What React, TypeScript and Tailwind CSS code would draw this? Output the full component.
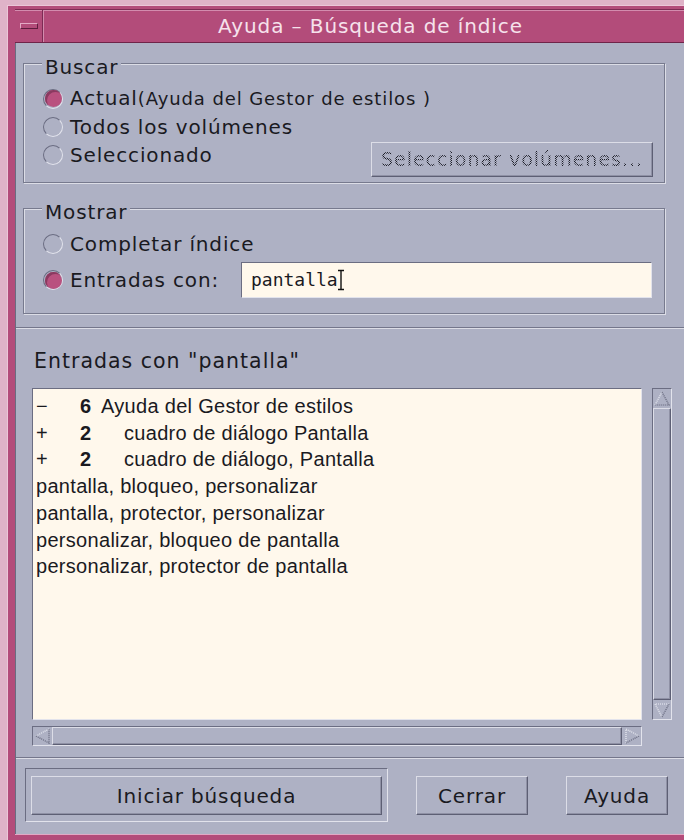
import React from "react";

const ui = "font-['DejaVu_Sans',sans-serif] text-[#1a1a1f]";
const raised =
  "border border-t-[#dcdde7] border-l-[#dcdde7] border-r-[#5d5f74] border-b-[#5d5f74] shadow-[inset_-1px_-1px_0_#8f91a5]";
const sunken =
  "border border-t-[#6b6d82] border-l-[#6b6d82] border-r-[#e2e3ec] border-b-[#e2e3ec]";
const etched =
  "border border-[#777a8e] shadow-[inset_1px_1px_0_#dcdde6,1px_1px_0_#dcdde6]";

const Radio = ({ on = false }: { on?: boolean }) => (
  <span
    className={`flex h-[20px] w-[20px] shrink-0 items-center justify-center rounded-full ${sunken}`}
  >
    {on && (
      <span className="h-[17px] w-[17px] rounded-full bg-[#b9517f] shadow-[inset_2px_2px_0_#8a3a60]" />
    )}
  </span>
);

const Separator = ({ className = "" }: { className?: string }) => (
  <div className={`h-[2px] border-t border-[#74768b] bg-[#dcdde6] ${className}`} />
);

// little stippled triangles used on the scroll bar ends
const Arrow = ({ dir }: { dir: "up" | "down" | "left" | "right" }) => {
  const shapes = {
    up: { light: "2,16 9,3", dark: "9,3 16,16 2,16" },
    down: { light: "16,3 2,3 9,16", dark: "9,16 16,3" },
    left: { light: "16,2 3,9", dark: "3,9 16,16 16,2" },
    right: { light: "3,16 3,2 16,9", dark: "16,9 3,16" },
  }[dir];
  return (
    <svg width="18" height="18" viewBox="0 0 18 18" className="shrink-0">
      <polyline points={shapes.light} fill="none" stroke="#eceef5" strokeWidth="1.2" strokeDasharray="1 1" />
      <polyline points={shapes.dark} fill="none" stroke="#5f6176" strokeWidth="1.2" strokeDasharray="1 1" />
    </svg>
  );
};

const IBeam = () => (
  <svg width="8" height="22" viewBox="0 0 8 22" className="-ml-[1px] shrink-0">
    <path d="M1 1.5h6M4 1.5v19M1 20.5h6" stroke="#111" strokeWidth="1.4" fill="none" />
  </svg>
);

const entries = [
  { sign: "−", count: "6", text: "Ayuda del Gestor de estilos", indent: false },
  { sign: "+", count: "2", text: "cuadro de diálogo Pantalla", indent: true },
  { sign: "+", count: "2", text: "cuadro de diálogo, Pantalla", indent: true },
];

const plainEntries = [
  "pantalla, bloqueo, personalizar",
  "pantalla, protector, personalizar",
  "personalizar, bloqueo de pantalla",
  "personalizar, protector de pantalla",
];

export default function App() {
  return (
    <div className="h-[840px] w-[684px] overflow-hidden bg-[#dfb3c8]">
      {/* window frame */}
      <div className="ml-[7px] mt-[5px] h-[900px] w-[760px] border-l border-t border-[#ecc6d8] bg-[#b34c7a] pl-[7px] pt-[3px]">
        {/* title bar */}
        <div className="flex h-[34px] w-[669px] border-y border-t-[#7d2b54] border-b-[#6f2449] bg-[#b34c7a] shadow-[inset_0_1px_0_#d38cae]">
          <div className="flex w-[28px] items-center justify-center border-r border-[#7d2b54] shadow-[1px_0_0_#d38cae]">
            <span className="h-[6px] w-[18px] border border-t-[#e3a9c5] border-l-[#e3a9c5] border-b-[#5e1c3e] border-r-[#5e1c3e] bg-[#b34c7a]" />
          </div>
          <div className="flex flex-1 items-center justify-center pl-[14px] font-['DejaVu_Sans',sans-serif] text-[20px] tracking-[0.9px] text-[#f6e2ec]">
            Ayuda – Búsqueda de índice
          </div>
        </div>

        {/* dialog body */}
        <div
          className={`h-[791px] w-[669px] border-l border-[#6a6c80] bg-[#aeb1c4] pt-[20px] shadow-[0_1px_0_#e2a9c4] ${ui} text-[20px] tracking-[0.85px]`}
        >
          {/* Buscar */}
          <div className={`ml-[7px] mr-[19px] pb-[5px] pl-[19px] pr-[11px] ${etched}`}>
            <div className="-ml-[1px] -mt-[9px] h-[24px] w-fit bg-[#aeb1c4] px-[3px] leading-[24px]">
              Buscar
            </div>
            <div className="mt-[5px] flex h-[29px] items-center gap-[7px] leading-[28px]">
              <Radio on />
              <span>
                Actual<span className="text-[18px] tracking-[0.9px]">(Ayuda del Gestor de estilos )</span>
              </span>
            </div>
            <div className="flex h-[28px] items-center gap-[7px] leading-[28px]">
              <Radio />
              <span>Todos los volúmenes</span>
            </div>
            <div className="flex h-[36px] items-start">
              <div className="flex h-[28px] items-center gap-[7px] leading-[28px]">
                <Radio />
                <span>Seleccionado</span>
              </div>
              <div
                className={`ml-auto mt-[1px] flex h-[35px] w-[282px] items-center justify-center bg-[#aeb1c4] ${raised}`}
              >
                <span className="bg-[conic-gradient(#1d1e28_25%,transparent_0_50%,#1d1e28_0_75%,transparent_0)] bg-[length:2px_2px] bg-clip-text text-[19px] tracking-[1px] text-transparent">
                  Seleccionar volúmenes...
                </span>
              </div>
            </div>
          </div>

          {/* Mostrar */}
          <div className={`ml-[7px] mr-[19px] mt-[25px] pb-[15px] pl-[19px] pr-[12px] ${etched}`}>
            <div className="-ml-[1px] -mt-[9px] h-[24px] w-fit bg-[#aeb1c4] px-[3px] leading-[24px]">
              Mostrar
            </div>
            <div className="mt-[5px] flex h-[29px] items-center gap-[7px] leading-[28px]">
              <Radio />
              <span>Completar índice</span>
            </div>
            <div className="mt-[4px] flex h-[36px] items-center leading-[28px]">
              <div className="flex items-center gap-[7px]">
                <Radio on />
                <span>Entradas con:</span>
              </div>
              <div
                className={`ml-auto flex h-[36px] w-[411px] items-center bg-[#fff8ec] pl-[9px] font-['DejaVu_Sans_Mono',monospace] text-[18px] tracking-normal ${sunken}`}
              >
                <span>pantalla</span>
                <IBeam />
              </div>
            </div>
          </div>

          <Separator className="mt-[13px]" />

          <div className="mt-[20px] pl-[18px] text-[20.5px] leading-[24px] tracking-[1px]">
            Entradas con "pantalla"
          </div>

          {/* results list with scroll bars */}
          <div className="ml-[16px] mt-[15px] flex gap-[10px]">
            <div
              className={`h-[332px] w-[610px] bg-[#fff8ec] pl-[3px] pt-[4px] font-['Liberation_Sans',Arial,sans-serif] text-[20px] leading-[26.7px] tracking-[0.3px] ${sunken}`}
            >
              {entries.map((e) => (
                <div key={e.text} className="flex">
                  <span className="w-[44px]">{e.sign}</span>
                  <span className="w-[21px] font-bold">{e.count}</span>
                  <span className={e.indent ? "pl-[23px]" : ""}>{e.text}</span>
                </div>
              ))}
              {plainEntries.map((t) => (
                <div key={t}>{t}</div>
              ))}
            </div>
            <div className={`flex h-[332px] w-[20px] flex-col ${sunken}`}>
              <Arrow dir="up" />
              <div className={`my-[1px] flex-1 ${raised}`} />
              <Arrow dir="down" />
            </div>
          </div>
          <div className={`ml-[16px] mt-[6px] flex h-[20px] w-[610px] ${sunken}`}>
            <Arrow dir="left" />
            <div className={`mx-[1px] flex-1 ${raised}`} />
            <Arrow dir="right" />
          </div>

          <Separator className="mt-[11px]" />

          {/* action buttons */}
          <div className="mt-[9px] flex items-start pl-[9px]">
            <div className={`h-[54px] w-[363px] px-[5px] pt-[7px] ${sunken}`}>
              <div className={`flex h-[39px] items-center justify-center ${raised}`}>Iniciar búsqueda</div>
            </div>
            <div className={`ml-[28px] mt-[8px] flex h-[39px] w-[112px] items-center justify-center ${raised}`}>
              Cerrar
            </div>
            <div className={`ml-[38px] mt-[8px] flex h-[39px] w-[102px] items-center justify-center ${raised}`}>
              Ayuda
            </div>
          </div>
        </div>
      </div>
    </div>
  );
}
